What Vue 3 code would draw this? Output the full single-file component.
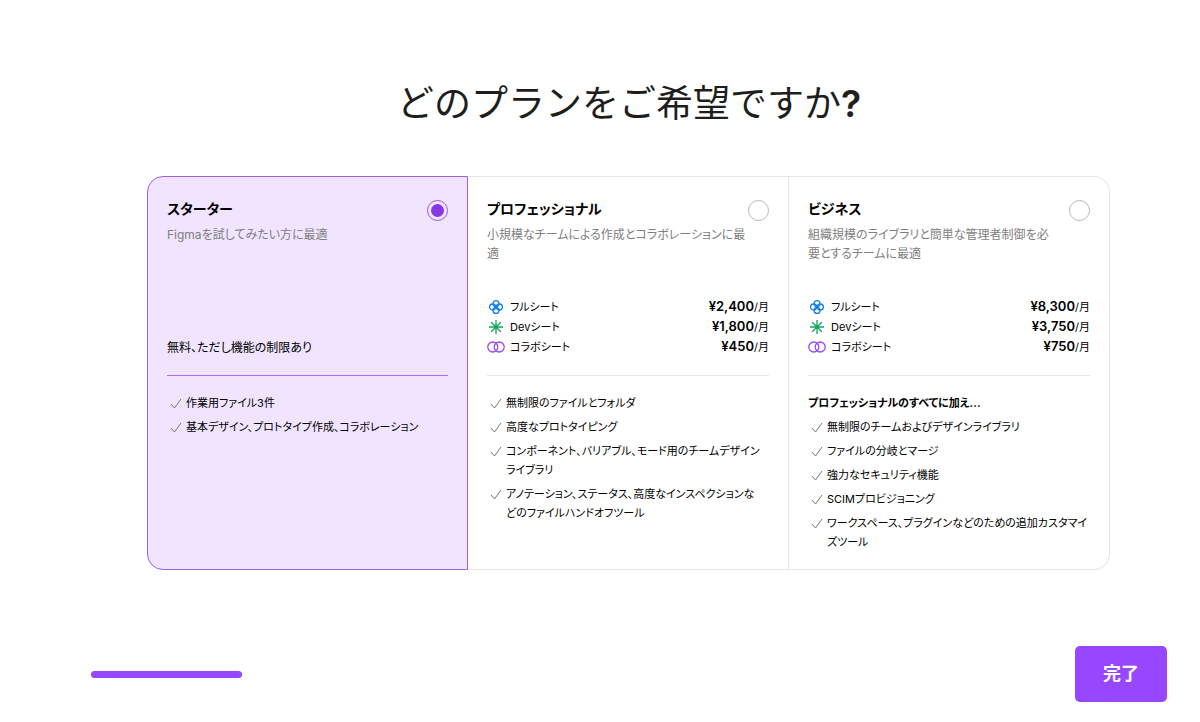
<template>
  <main class="page">
    <h1 class="title">どのプランをご希望ですか<span class="mark">?</span></h1>

    <form class="plans" @submit.prevent>
      <section
        v-for="plan in plans"
        :key="plan.id"
        class="plan"
        :class="{ selected: selected === plan.id }"
      >
        <div class="summary">
          <div class="head">
            <div class="intro">
              <label class="name" :for="plan.id">{{ plan.name }}</label>
              <p class="desc">
                <span v-for="line in plan.desc" :key="line" class="line">{{ line }}</span>
              </p>
            </div>
            <input :id="plan.id" v-model="selected" class="radio" type="radio" name="plan" :value="plan.id" />
          </div>

          <p v-if="plan.note" class="note">{{ plan.note }}</p>
          <ul v-else class="seats">
            <li v-for="seat in plan.seats" :key="seat.type" class="seat">
              <svg v-if="seat.type === 'full'" class="icon full" viewBox="0 0 18 18">
                <circle cx="9" cy="5.6" r="3" />
                <circle cx="12.4" cy="9" r="3" />
                <circle cx="9" cy="12.4" r="3" />
                <circle cx="5.6" cy="9" r="3" />
              </svg>
              <svg v-else-if="seat.type === 'dev'" class="icon dev" viewBox="0 0 18 18">
                <path d="M9 2v14M2 9h14M4.2 4.2l9.6 9.6M13.8 4.2l-9.6 9.6" />
              </svg>
              <svg v-else class="icon collab" viewBox="0 0 18 18">
                <circle cx="5.8" cy="9" r="5" />
                <circle cx="12.2" cy="9" r="5" />
              </svg>
              <span class="seat-name">{{ seatNames[seat.type] }}</span>
              <span class="price">¥{{ seat.price }}<small>/月</small></span>
            </li>
          </ul>
        </div>

        <div class="details">
          <p v-if="plan.lead" class="lead">{{ plan.lead }}</p>
          <ul class="features">
            <li v-for="feature in plan.features" :key="feature[0]" class="feature">
              <svg class="check" viewBox="0 0 12 19">
                <path d="M1 10l3.5 4L11 5" />
              </svg>
              <span><span v-for="line in feature" :key="line" class="line">{{ line }}</span></span>
            </li>
          </ul>
        </div>
      </section>
    </form>

    <footer class="footer">
      <div class="progress"></div>
      <button class="done" type="button">完了</button>
    </footer>
  </main>
</template>

<script setup>
import { ref } from 'vue'

const selected = ref('starter')

const seatNames = {
  full: 'フルシート',
  dev: 'Devシート',
  collab: 'コラボシート'
}

const plans = [
  {
    id: 'starter',
    name: 'スターター',
    desc: ['Figmaを試してみたい方に最適'],
    note: '無料、ただし機能の制限あり',
    features: [['作業用ファイル3件'], ['基本デザイン、プロトタイプ作成、コラボレーション']]
  },
  {
    id: 'professional',
    name: 'プロフェッショナル',
    desc: ['小規模なチームによる作成とコラボレーションに最', '適'],
    seats: [
      { type: 'full', price: '2,400' },
      { type: 'dev', price: '1,800' },
      { type: 'collab', price: '450' }
    ],
    features: [
      ['無制限のファイルとフォルダ'],
      ['高度なプロトタイピング'],
      ['コンポーネント、バリアブル、モード用のチームデザイン', 'ライブラリ'],
      ['アノテーション、ステータス、高度なインスペクションな', 'どのファイルハンドオフツール']
    ]
  },
  {
    id: 'business',
    name: 'ビジネス',
    desc: ['組織規模のライブラリと簡単な管理者制御を必', '要とするチームに最適'],
    seats: [
      { type: 'full', price: '8,300' },
      { type: 'dev', price: '3,750' },
      { type: 'collab', price: '750' }
    ],
    lead: 'プロフェッショナルのすべてに加え...',
    features: [
      ['無制限のチームおよびデザインライブラリ'],
      ['ファイルの分岐とマージ'],
      ['強力なセキュリティ機能'],
      ['SCIMプロビジョニング'],
      ['ワークスペース、プラグインなどのための追加カスタマイ', 'ズツール']
    ]
  }
]
</script>

<style>
body {
  background: #fff;
}
</style>

<style scoped>
.page {
  box-sizing: border-box;
  min-height: 100vh;
  display: flex;
  flex-direction: column;
  padding: 76px 33px 20px 91px;
  font-family: Inter, "Noto Sans CJK JP", sans-serif;
  font-size: 11px;
  line-height: 19px;
  color: #000;
  font-feature-settings: "palt";
}

h1,
p,
ul {
  margin: 0;
  padding: 0;
  list-style: none;
}

.title {
  margin: 0 56px 44px;
  font-size: 37px;
  line-height: 56px;
  font-weight: 400;
  font-feature-settings: normal;
  text-align: center;
  color: #1e1e1e;
}

.mark {
  font-weight: 600;
}

.plans {
  display: grid;
  grid-template-columns: repeat(3, 1fr);
  margin: 0 57px 0 56px;
}

.plan {
  min-width: 0;
  padding: 21px 19px 17px;
  border: 1px solid #e6e6e6;
  border-left-width: 0;
}

.plan:first-child {
  border-left-width: 1px;
  border-radius: 16px 0 0 16px;
}

.plan:last-child {
  border-radius: 0 16px 16px 0;
}

.plan.selected {
  background: #f0e4ff;
  border-color: #a063dc;
}

.summary {
  min-height: 159px;
  padding-bottom: 18px;
  border-bottom: 1px solid #e6e6e6;
  display: flex;
  flex-direction: column;
  justify-content: space-between;
}

.selected .summary {
  border-color: #a871ee;
}

.head {
  display: flex;
  align-items: flex-start;
  justify-content: space-between;
}

.intro {
  min-width: 0;
}

.name {
  display: block;
  font-size: 14px;
  line-height: 22px;
  font-weight: 700;
}

.desc {
  margin-top: 5px;
  font-size: 12px;
  color: #808080;
}

.note {
  font-size: 12px;
}

.line {
  display: block;
  white-space: nowrap;
}

.radio {
  appearance: none;
  box-sizing: border-box;
  flex: none;
  width: 21px;
  height: 21px;
  margin: 2px 0 0;
  padding: 3px;
  border: 1px solid #b8b8b8;
  border-radius: 50%;
}

.radio:checked {
  border-color: #9a55e0;
}

.radio:checked::before {
  content: "";
  display: block;
  height: 100%;
  border-radius: 50%;
  background: #8638e5;
}

.seat {
  display: flex;
  align-items: center;
}

.icon {
  width: 18px;
  height: 18px;
  margin-right: 5px;
  fill: none;
  stroke-width: 1.3;
}

.full {
  stroke: #1680e8;
}

.dev {
  stroke: #14a35a;
}

.collab {
  stroke: #9747ff;
}

.price {
  margin-left: auto;
  font-size: 13px;
  font-weight: 600;
  font-feature-settings: normal;
}

.price small {
  font-size: 11px;
  font-weight: 400;
}

.details {
  padding-top: 18px;
}

.lead {
  margin-bottom: 5px;
  font-weight: 700;
}

.features {
  display: grid;
  gap: 5px;
}

.feature {
  display: flex;
  padding-left: 3px;
}

.check {
  flex: none;
  width: 12px;
  height: 19px;
  margin-right: 4px;
  fill: none;
  stroke: #777;
}

.footer {
  display: flex;
  align-items: center;
  justify-content: space-between;
  margin-top: auto;
}

.progress {
  width: 151px;
  height: 7px;
  border-radius: 4px;
  background: #9747ff;
}

.done {
  padding: 16px 28px;
  border: 0;
  border-radius: 5px;
  background: #9747ff;
  color: #fff;
  font-family: inherit;
  font-size: 18px;
  line-height: 24px;
  font-weight: 700;
}
</style>
